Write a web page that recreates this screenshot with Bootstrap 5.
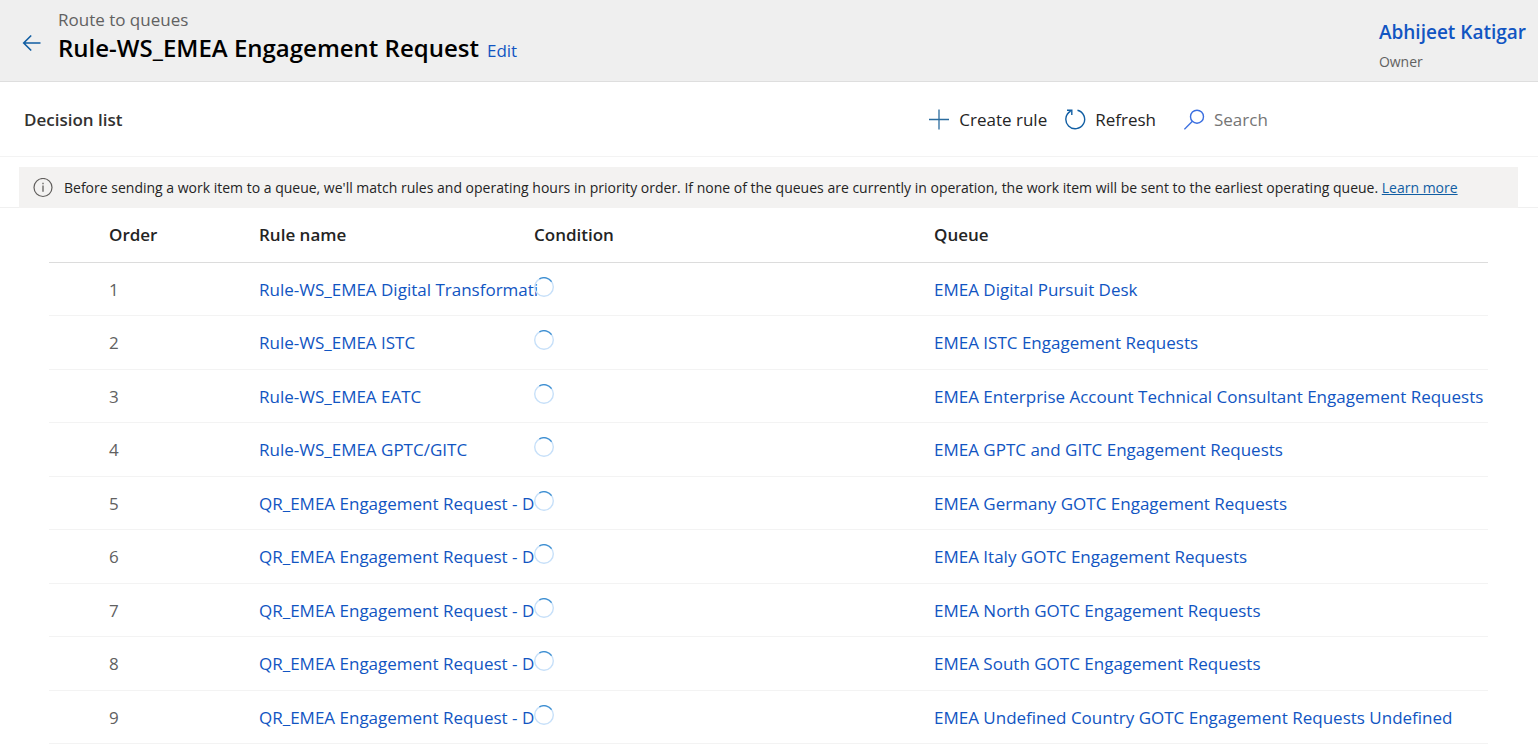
<!DOCTYPE html>
<html lang="en">
<head>
<meta charset="utf-8">
<meta name="viewport" content="width=device-width, initial-scale=1">
<title>Rule-WS_EMEA Engagement Request</title>
<link href="https://cdn.jsdelivr.net/npm/bootstrap@5.3.0/dist/css/bootstrap.min.css" rel="stylesheet">
<style>
  body { font-family: "Segoe UI", "Open Sans", "Noto Sans", sans-serif; font-size: 17px; line-height: 24px; color: #242424; background: #fff; }
  a { color: #1155c2; text-decoration: none; }
  svg { display: block; flex: none; }
  .page-head { background: #efefef; border-bottom: 1px solid #dedede; padding: 8px 12px 7px 22px; }
  .back-link { color: #115ea3; margin-top: 26px; }
  .crumb { color: #616161; }
  .page-title { font-size: 24px; line-height: 32px; font-weight: 600; color: #000; }
  .owner-name { font-size: 19px; font-weight: 600; }
  .owner-role { font-size: 14px; color: #616161; padding-top: 6px; }
  .command-bar { padding: 24px 20px 22px 24px; border-bottom: 1px solid #f3f3f3; }
  .section-title { font-size: 17px; line-height: 28px; font-weight: 600; color: #323130; }
  .command-bar .btn { font-size: 17px; line-height: 28px; color: #242424; }
  .refresh-btn { margin: 0 28px 0 18px; }
  .search-box { width: 334px; }
  .search-box .form-control { font-size: 17px; line-height: 28px; color: #242424; background: none; }
  .search-box .form-control::placeholder { color: #757575; opacity: 1; }
  .notice-wrap { padding: 10px 20px 0 19px; border-bottom: 1px solid #f0f0f0; }
  .notice { background: #f3f2f1; padding: 9px 14px 8px; font-size: 14px; margin-bottom: -1px; gap: 11px; }
  .notice a { color: #115ea3; text-decoration: underline; }
  .list-wrap { padding: 0 50px 0 49px; }
  .rules { table-layout: fixed; --bs-table-bg: transparent; }
  .rules th, .rules td { padding: 0; height: 53px; white-space: nowrap; vertical-align: middle; border-bottom: 1px solid #f3f3f3; color: #616161; }
  .rules thead th { height: 54px; font-weight: 600; color: #242424; border-color: #dcdcdc; }
  .rules tbody td { padding-top: 2px; }
  .rules tbody tr:nth-child(even) td { height: 54px; }
  .rules th:first-child, .rules td:first-child { padding-left: 60px; }
  .rules svg { margin-bottom: 6px; }
  .col-order { width: 210px; }
  .col-rule { width: 275px; }
  .col-condition { width: 400px; }
</style>
</head>
<body>
<svg width="0" height="0" class="position-absolute" aria-hidden="true">
  <symbol id="loading" viewBox="0 0 20 20">
    <circle cx="10" cy="10" r="9.3" fill="none" stroke="#c7e0f9" stroke-width="1.4"/>
    <path d="M5.400 1.900A9.300 9.300 0 0 1 17.600 4.600" fill="none" stroke="#3f8fd0" stroke-width="1.4"/>
  </symbol>
</svg>

<header class="page-head d-flex align-items-start">
  <a href="#" class="back-link me-3" aria-label="Back">
    <svg width="20" height="20" viewBox="0 0 20 20" fill="none" stroke="currentColor" stroke-width="1.6"><path d="M18.500 9H1.500M9.200 1.500L1.700 9L9.200 16.500"/></svg>
  </a>
  <div class="flex-grow-1">
    <div class="crumb">Route to queues</div>
    <div class="d-flex align-items-baseline gap-2">
      <h1 class="page-title mb-0">Rule-WS_EMEA Engagement Request</h1>
      <a href="#">Edit</a>
    </div>
  </div>
  <div class="pt-2 mt-1">
    <a href="#" class="owner-name d-block">Abhijeet Katigar</a>
    <div class="owner-role">Owner</div>
  </div>
</header>

<main>
  <div class="command-bar d-flex align-items-center">
    <h2 class="section-title mb-0 me-auto">Decision list</h2>
    <button type="button" class="btn border-0 p-0 d-flex align-items-center gap-2">
      <svg width="22" height="22" viewBox="0 0 22 22" fill="none" stroke="#2b6c9e" stroke-width="1.3"><path d="M10 .5V20.500M0 10.500H20"/></svg>
      Create rule
    </button>
    <button type="button" class="btn refresh-btn border-0 p-0 d-flex align-items-center gap-2">
      <svg width="22" height="22" viewBox="0 0 22 22" fill="none" stroke="#115ea3" stroke-width="1.4"><path d="M12.500 1.200A9.400 9.400 0 1 1 5.700 2.100M2 1.200H6.800V6"/></svg>
      Refresh
    </button>
    <div class="search-box d-flex align-items-center gap-2">
      <svg width="22" height="22" viewBox="0 0 22 22" fill="none" stroke="#3b6fe0" stroke-width="1.4"><circle cx="13" cy="7.700" r="6.500"/><path d="M8.400 12.300L.4 20.300"/></svg>
      <input type="search" class="form-control border-0 p-0 shadow-none" placeholder="Search" aria-label="Search">
    </div>
  </div>

  <div class="notice-wrap">
    <div class="notice d-flex align-items-center" role="status">
      <svg width="20" height="20" viewBox="0 0 20 20" fill="none" stroke="#605e5c"><circle cx="10" cy="9.500" r="9" stroke-width="1.200"/><path d="M10 7.500V13.700M10 4.800V6.300" stroke-width="1.300"/></svg>
      <span>Before sending a work item to a queue, we'll match rules and operating hours in priority order. If none of the queues are currently in operation, the work item will be sent to the earliest operating queue. <a href="#">Learn more</a></span>
    </div>
  </div>

  <div class="list-wrap">
    <table class="table rules mb-0">
      <colgroup><col class="col-order"><col class="col-rule"><col class="col-condition"><col></colgroup>
      <thead>
        <tr><th scope="col">Order</th><th scope="col">Rule name</th><th scope="col">Condition</th><th scope="col">Queue</th></tr>
      </thead>
      <tbody>
        <tr><td>1</td><td><a href="#">Rule-WS_EMEA Digital Transformati</a></td><td><svg width="20" height="20"><use href="#loading"/></svg></td><td><a href="#">EMEA Digital Pursuit Desk</a></td></tr>
        <tr><td>2</td><td><a href="#">Rule-WS_EMEA ISTC</a></td><td><svg width="20" height="20"><use href="#loading"/></svg></td><td><a href="#">EMEA ISTC Engagement Requests</a></td></tr>
        <tr><td>3</td><td><a href="#">Rule-WS_EMEA EATC</a></td><td><svg width="20" height="20"><use href="#loading"/></svg></td><td><a href="#">EMEA Enterprise Account Technical Consultant Engagement Requests</a></td></tr>
        <tr><td>4</td><td><a href="#">Rule-WS_EMEA GPTC/GITC</a></td><td><svg width="20" height="20"><use href="#loading"/></svg></td><td><a href="#">EMEA GPTC and GITC Engagement Requests</a></td></tr>
        <tr><td>5</td><td><a href="#">QR_EMEA Engagement Request - D</a></td><td><svg width="20" height="20"><use href="#loading"/></svg></td><td><a href="#">EMEA Germany GOTC Engagement Requests</a></td></tr>
        <tr><td>6</td><td><a href="#">QR_EMEA Engagement Request - D</a></td><td><svg width="20" height="20"><use href="#loading"/></svg></td><td><a href="#">EMEA Italy GOTC Engagement Requests</a></td></tr>
        <tr><td>7</td><td><a href="#">QR_EMEA Engagement Request - D</a></td><td><svg width="20" height="20"><use href="#loading"/></svg></td><td><a href="#">EMEA North GOTC Engagement Requests</a></td></tr>
        <tr><td>8</td><td><a href="#">QR_EMEA Engagement Request - D</a></td><td><svg width="20" height="20"><use href="#loading"/></svg></td><td><a href="#">EMEA South GOTC Engagement Requests</a></td></tr>
        <tr><td>9</td><td><a href="#">QR_EMEA Engagement Request - D</a></td><td><svg width="20" height="20"><use href="#loading"/></svg></td><td><a href="#">EMEA Undefined Country GOTC Engagement Requests Undefined</a></td></tr>
      </tbody>
    </table>
  </div>
</main>
<script src="https://cdn.jsdelivr.net/npm/bootstrap@5.3.0/dist/js/bootstrap.bundle.min.js"></script>
</body>
</html>
